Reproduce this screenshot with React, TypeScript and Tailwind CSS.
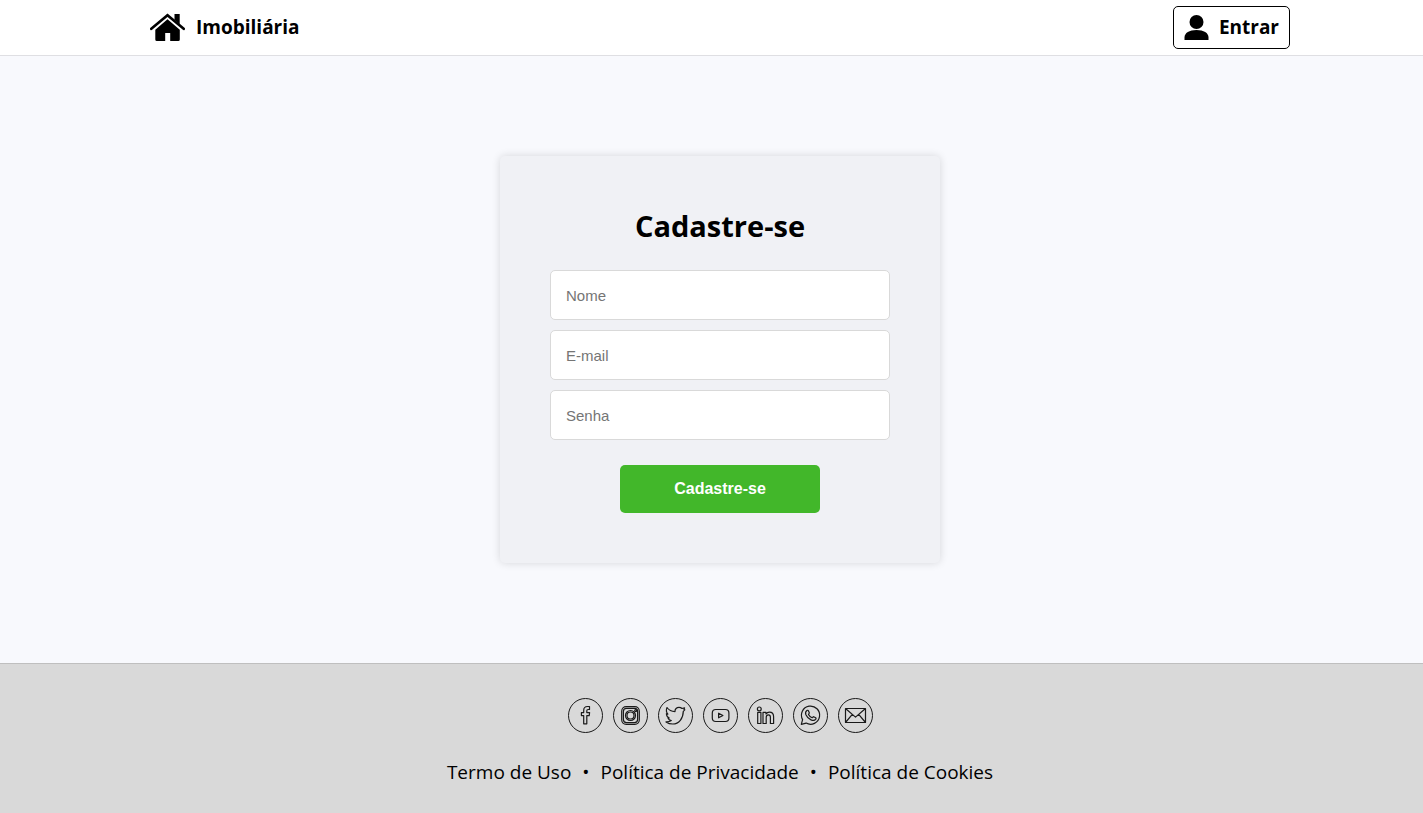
import type { ReactNode } from "react";

const socials: { name: string; icon: ReactNode }[] = [
  {
    name: "Facebook",
    icon: (
      <path d="M15.7 25.8v-8.200h-2.300v-3h2.300v-2.200c0-2.400 1.400-3.900 3.800-3.900h2v3h-1.400c-.9 0-1.300.4-1.300 1.300v1.800h2.800l-.4 3h-2.400v8.200z" />
    ),
  },
  {
    name: "Instagram",
    icon: (
      <>
        <rect x="8.7" y="8.7" width="17.6" height="17.6" rx="4.5" />
        <rect x="10.4" y="10.4" width="14.2" height="14.2" rx="3" />
        <circle cx="17.5" cy="17.5" r="5" />
        <circle cx="17.5" cy="17.5" r="3.5" />
        <circle cx="22.7" cy="12.6" r="1" />
      </>
    ),
  },
  {
    name: "Twitter",
    icon: (
      <path d="M9 9.500C10.800 12 13.600 13.500 17 13.600C16.800 11 18.700 9.300 21 9.300C22.300 9.300 23.300 9.800 24 10.500L26.600 9.800L26 11.400L26.800 11.800L25.300 13.300C25.200 20.500 21 26 14.800 26C12.300 26 10 25.300 8 23.900C10.200 24 12 23.600 13.300 22.600C11.600 22.300 10.500 21.500 10 20H11.200C9.500 19.200 8.500 17.700 8.400 15.700L9.900 16.100C8.400 14.500 8 11.900 9 9.500Z" />
    ),
  },
  {
    name: "YouTube",
    icon: (
      <>
        <rect x="9.3" y="11.5" width="16.600" height="12" rx="3.5" />
        <path d="M15.600 15.200v4.600l4.300-2.300z" />
      </>
    ),
  },
  {
    name: "LinkedIn",
    icon: (
      <>
        <circle cx="11.300" cy="10.900" r="1.900" />
        <path d="M9.700 14.400h3.200v11.100h-3.200zM15 14.400h3v1.500c.8-1.200 1.900-1.800 3.400-1.800 2.800 0 4.200 1.800 4.200 4.700v6.700h-3.200v-6.200c0-1.600-.6-2.500-1.900-2.500-1.500 0-2.300 1-2.300 2.700v6H15z" />
      </>
    ),
  },
  {
    name: "WhatsApp",
    icon: (
      <>
        <path d="M8.300 26.300l1.300-4.700a9.100 9.100 0 1 1 3.500 3.500z" />
        <path d="M13.900 12.500c.6-.4 1.200-.3 1.500.3l.9 1.900c.2.500-.8 1.400-.8 1.700.8 1.600 2 2.700 3.600 3.300.4.100 1.100-1.200 1.600-1l2 1c.5.300.4 1-.1 1.700-1 1.300-2.700 1.300-4.600.5-2.300-1-4.100-2.800-5.100-5.100-.6-1.700-.3-3.400 1-4.300z" />
      </>
    ),
  },
  {
    name: "E-mail",
    icon: (
      <path d="M7.500 10.500h20v14h-20zM7.500 10.500l10 8.600 10-8.600M7.500 24.500l6.800-8.100M27.500 24.500l-6.800-8.100" />
    ),
  },
];

const fields = [
  { label: "Nome", type: "text" },
  { label: "E-mail", type: "email" },
  { label: "Senha", type: "password" },
];

const links = ["Termo de Uso", "Política de Privacidade", "Política de Cookies"];

export default function App() {
  return (
    <div className="flex min-h-screen flex-col bg-[#f8f9fd] font-['Open_Sans',sans-serif] text-black">
      <header className="border-b border-[#dfdfe3] bg-white pl-[17px]">
        <div className="mx-auto flex h-[55px] max-w-[1140px] items-center justify-between">
          <a href="#" className="flex items-center gap-[11px] text-[19px] font-bold">
            <svg viewBox="0 0 35 35" className="size-[35px]" aria-hidden="true">
              <path
                d="M1.300 18.800L17.500 5.200l16.200 13.600"
                fill="none"
                stroke="currentColor"
                strokeWidth="2.600"
                strokeLinecap="round"
                strokeLinejoin="miter"
              />
              <path d="M24.500 4h5.200v10.200l-5.200-4.400z" />
              <path d="M17.500 9.200l12.300 10.500v9.800q0 1.500-1.500 1.500H20.200v-8h-5v8H6.800q-1.500 0-1.500-1.500v-9.800z" />
            </svg>
            Imobiliária
          </a>
          <button
            type="button"
            className="flex h-[43px] items-center gap-[10px] rounded-[5px] border border-black px-[10px] text-[19px] font-bold"
          >
            <svg viewBox="0 0 25 25" className="size-[25px]" aria-hidden="true">
              <circle cx="12.500" cy="7" r="7" />
              <path d="M.5 25v-2.500c0-4.600 4.800-7.500 12-7.500s12 2.900 12 7.500V25z" />
            </svg>
            Entrar
          </button>
        </div>
      </header>

      <main className="flex grow items-center justify-center py-[100px] pl-[17px]">
        <form className="flex w-[440px] flex-col items-center rounded-[5px] bg-[#f0f1f5] p-[50px] shadow-[0_0_8px_rgba(0,0,0,0.14)]">
          <h1 className="mb-6 text-[29px] leading-10 font-bold">Cadastre-se</h1>
          <div className="flex w-full flex-col gap-[10px]">
            {fields.map((field) => (
              <input
                key={field.label}
                type={field.type}
                aria-label={field.label}
                placeholder={field.label}
                className="h-[50px] w-full rounded-[5px] border border-[#d9d9d9] bg-white px-[15px] font-['Liberation_Sans',sans-serif] text-[15px] placeholder:text-[#757575]"
              />
            ))}
          </div>
          <button
            type="submit"
            className="mt-[25px] h-12 w-[200px] rounded-[5px] bg-[#42b72a] font-['Liberation_Sans',sans-serif] text-base font-bold text-white"
          >
            Cadastre-se
          </button>
        </form>
      </main>

      <footer className="flex h-[150px] flex-col items-center border-t border-[#bfbfbf] bg-[#d9d9d9] pt-[34px] pl-[17px]">
        <nav aria-label="Redes sociais" className="flex gap-[10px]">
          {socials.map((social) => (
            <a key={social.name} href="#" aria-label={social.name}>
              <svg
                viewBox="0 0 35 35"
                className="size-[35px]"
                fill="none"
                stroke="#1a1a1a"
                strokeWidth="1"
                strokeLinejoin="round"
              >
                <circle cx="17.500" cy="17.500" r="17" />
                <g strokeWidth="1.200">{social.icon}</g>
              </svg>
            </a>
          ))}
        </nav>
        <ul className="mt-[25px] flex gap-[11px] text-[19px] leading-7">
          {links.map((link, index) => (
            <li key={link} className="flex gap-[11px]">
              {index > 0 && <span aria-hidden="true">•</span>}
              <a href="#">{link}</a>
            </li>
          ))}
        </ul>
      </footer>
    </div>
  );
}
